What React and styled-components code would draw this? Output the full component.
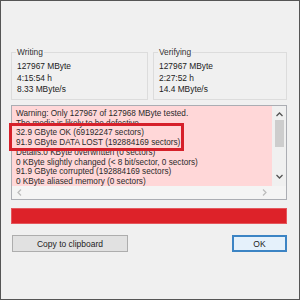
import React from 'react';
import styled, { createGlobalStyle } from 'styled-components';

const GlobalStyle = createGlobalStyle`
  html, body {
    margin: 0;
    padding: 0;
    background: #f0f0f0;
  }
  * {
    box-sizing: border-box;
  }
`;

const stats = [
  { title: 'Writing', lines: ['127967 MByte', '4:15:54 h', '8.33 MByte/s'] },
  { title: 'Verifying', lines: ['127967 MByte', '2:27:52 h', '14.4 MByte/s'] },
];

const logLines = [
  'Warning: Only 127967 of 127968 MByte tested.',
  'The media is likely to be defective.',
  '32.9 GByte OK (69192247 sectors)',
  '91.9 GByte DATA LOST (192884169 sectors)',
  'Details:0 KByte overwritten (0 sectors)',
  '0 KByte slightly changed (< 8 bit/sector, 0 sectors)',
  '91.9 GByte corrupted (192884169 sectors)',
  '0 KByte aliased memory (0 sectors)',
];

const App = () => {
  return (
    <>
      <GlobalStyle />
      <Window>
        <StatsRow>
          {stats.map((group) => (
            <GroupBox key={group.title}>
              <Legend>{group.title}</Legend>
              {group.lines.map((line) => (
                <StatLine key={line}>{line}</StatLine>
              ))}
            </GroupBox>
          ))}
        </StatsRow>

        <LogBox>
          <LogMain>
            <LogText>
              {logLines.map((line) => (
                <LogLine key={line}>{line}</LogLine>
              ))}
            </LogText>
            <VScroll>
              <Arrow>
                <svg width="7" height="5" viewBox="0 0 7 5">
                  <path d="M0.5 4 L3.5 1 L6.5 4" fill="none" stroke="#555" strokeWidth="1.3" />
                </svg>
              </Arrow>
              <Thumb />
              <Spacer />
              <Arrow>
                <svg width="7" height="5" viewBox="0 0 7 5">
                  <path d="M0.5 1 L3.5 4 L6.5 1" fill="none" stroke="#555" strokeWidth="1.3" />
                </svg>
              </Arrow>
            </VScroll>
          </LogMain>
          <HScroll>
            <svg width="5" height="7" viewBox="0 0 5 7">
              <path d="M4 0.5 L1 3.5 L4 6.5" fill="none" stroke="#bbb" strokeWidth="1.2" />
            </svg>
            <svg width="5" height="7" viewBox="0 0 5 7">
              <path d="M1 0.5 L4 3.5 L1 6.5" fill="none" stroke="#bbb" strokeWidth="1.2" />
            </svg>
          </HScroll>
          <Highlight />
        </LogBox>

        <ProgressBar />

        <ButtonRow>
          <Button $width={116}>Copy to clipboard</Button>
          <Button $width={55} $primary>OK</Button>
        </ButtonRow>
      </Window>
    </>
  );
};

const Window = styled.div`
  width: 300px;
  height: 300px;
  border: 1px solid #555;
  padding: 46px 12px 0 10px;
  font-family: 'Liberation Sans', Arial, sans-serif;
  color: #222;
`;

const StatsRow = styled.div`
  display: grid;
  grid-template-columns: 137px 1fr;
  gap: 5px;
`;

const GroupBox = styled.fieldset`
  margin: 0;
  height: 53px;
  padding: 4px 5px 0;
  border: 1px solid #dcdcdc;
`;

const Legend = styled.legend`
  padding: 0 1px;
  margin-left: -1px;
  font-size: 8.4px;
  line-height: 10px;
  color: #333;
`;

const StatLine = styled.div`
  font-size: 8.4px;
  line-height: 11.5px;
  white-space: nowrap;
`;

const LogBox = styled.div`
  position: relative;
  margin-top: 5px;
  height: 95px;
  border: 1px solid #abadb3;
  display: flex;
  flex-direction: column;
`;

const LogMain = styled.div`
  flex: 1;
  display: flex;
  min-height: 0;
`;

const LogText = styled.div`
  flex: 1;
  background: #ffd7d8;
  padding: 3px 0 0 4px;
  overflow: hidden;
  margin-right: 1px;
`;

const LogLine = styled.div`
  font-size: 8.2px;
  line-height: 9.7px;
  color: #2a2a2a;
  white-space: nowrap;
`;

const VScroll = styled.div`
  width: 13px;
  background: #f0f0f0;
  display: flex;
  flex-direction: column;
  align-items: center;
  padding: 5px 0 6px;
`;

const Arrow = styled.div`
  height: 7px;
  display: flex;
  align-items: center;
  justify-content: center;
`;

const Thumb = styled.div`
  width: 9px;
  height: 27px;
  margin-top: 2px;
  background: #cdcdcd;
`;

const Spacer = styled.div`
  flex: 1;
`;

const HScroll = styled.div`
  height: 13px;
  background: #f4f4f4;
  display: flex;
  justify-content: space-between;
  align-items: center;
  padding: 0 19px 0 5px;
`;

const Highlight = styled.div`
  position: absolute;
  left: -3px;
  top: 17px;
  width: 175px;
  height: 28px;
  border: 3px solid #d6202a;
`;

const ProgressBar = styled.div`
  margin-top: 8px;
  height: 16px;
  background: #dd2229;
  border: 1px solid #e4575c;
`;

const ButtonRow = styled.div`
  margin-top: 11px;
  display: flex;
  justify-content: space-between;
  padding-left: 1px;
`;

const Button = styled.div`
  width: ${({ $width }) => $width}px;
  height: 17px;
  display: flex;
  align-items: center;
  justify-content: center;
  font-size: 8.5px;
  color: #222;
  background: ${({ $primary }) => ($primary ? '#e5f1fb' : '#e1e1e1')};
  border: ${({ $primary }) => ($primary ? '2px solid #3c84c4' : '1px solid #adadad')};
`;

export default App;
